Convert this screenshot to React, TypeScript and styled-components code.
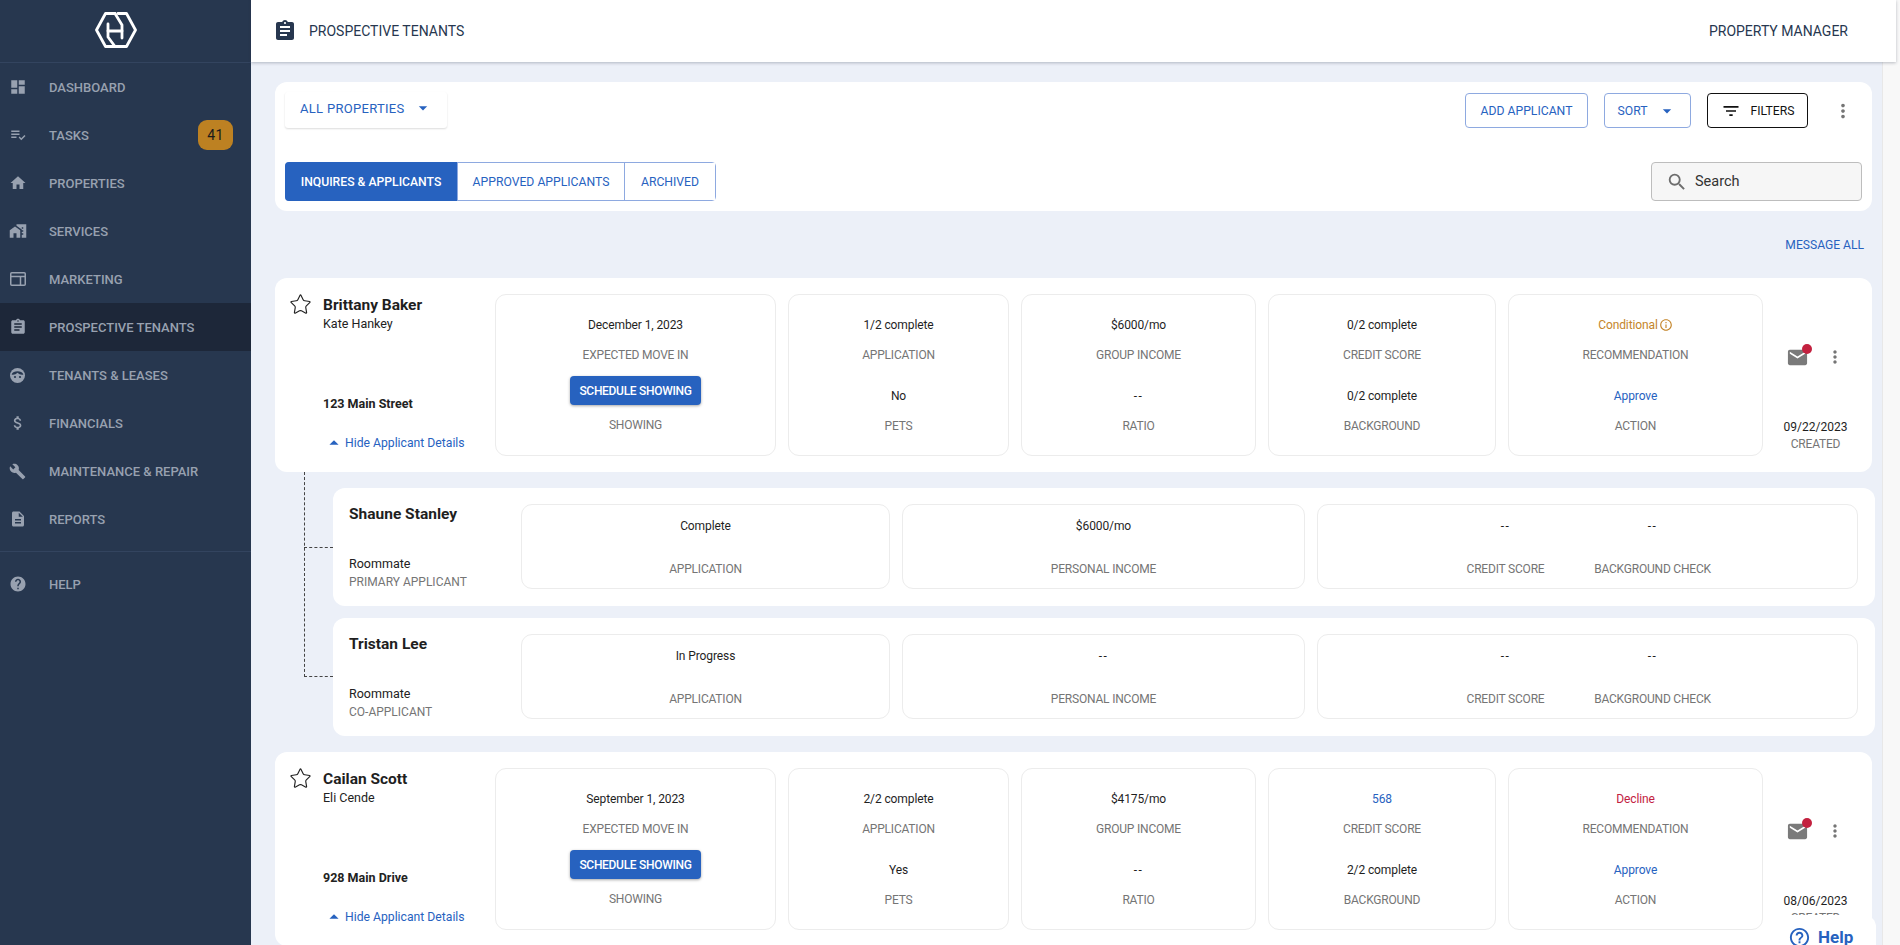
import React from "react";
import styled, { createGlobalStyle } from "styled-components";
import { Star } from "lucide-react";
import {
  MdDashboard, MdPlaylistAddCheck, MdHome, MdMapsHomeWork, MdAssignment,
  MdAttachMoney, MdBuild, MdDescription, MdHelp, MdMail, MdMoreVert, MdFilterList, MdSearch,
  MdArrowDropDown, MdArrowDropUp, MdInfoOutline, MdHelpOutline,
} from "react-icons/md";

const Global = createGlobalStyle`
  html, body { margin: 0; height: 100%; overflow: hidden; background: #ecf0f8; }
  body { font-family: Roboto, "Liberation Sans", sans-serif; color: #1f1f1f; }
  * { box-sizing: border-box; }
`;

const Shell = styled.div`display: flex; height: 945px; width: 1900px; position: relative; overflow: hidden;`;
const Sidebar = styled.aside`width: 251px; flex: none; background: #27374f; display: flex; flex-direction: column;`;
const LogoBar = styled.div`height: 63px; display: flex; align-items: center; justify-content: center; padding: 0 20px 2px 0; border-bottom: 1px solid #33445f;`;
const NavList = styled.nav`display: flex; flex-direction: column; padding-bottom: 8px; border-bottom: 1px solid #33445f;`;
const HelpNav = styled.nav`display: flex; flex-direction: column; padding-top: 8px;`;
const NavItem = styled.a<{ $active?: boolean }>`
  height: 48px; display: flex; align-items: center; padding: 0 18px 0 9px; gap: 23px;
  color: #98a1b0; font-size: 13px; font-weight: 500;
  background: ${(p) => (p.$active ? "#1d2739" : "transparent")};
  svg { flex: none; }
`;
const NavIcon = styled.span`width: 17px; height: 18px; display: flex; align-items: center; justify-content: center;`;
const NavLabel = styled.span`flex: 1; white-space: nowrap;`;
const Count = styled.span`
  width: 35px; height: 30px; border-radius: 9px; background: #bd8122; color: #1b1b1b;
  font-size: 14px; display: flex; align-items: center; justify-content: center; font-weight: 400; letter-spacing: 0.5px;
`;

const Main = styled.main`flex: 1; min-width: 0; display: flex; flex-direction: column;`;
const Header = styled.header`
  height: 62px; flex: none; margin-right: 4px; background: #fff; display: flex; align-items: center; justify-content: space-between;
  padding: 0 48px 0 22px; box-shadow: 0 1px 3px rgba(40, 50, 70, 0.3); z-index: 2; color: #27374f; font-size: 14px;
`;
const HeaderTitle = styled.div`display: flex; align-items: center; gap: 12px;`;
const Content = styled.div`flex: 1; padding: 20px 28px 0 24px; display: flex; flex-direction: column; overflow: hidden;`;
const Track = styled.div`position: absolute; top: 0; right: 0; bottom: 0; width: 18px; background: #f8f8f8; border-left: 1px solid #e8e8e8; z-index: 1;`;

const Toolbar = styled.section`
  background: #fff; border-radius: 12px; height: 129px; padding: 10px; display: flex; flex-direction: column; gap: 34px; flex: none;
`;
const ToolRow = styled.div`display: flex; align-items: flex-end; justify-content: space-between; height: 36px;`;
const TabRow = styled.div`display: flex; align-items: center; justify-content: space-between; height: 39px;`;
const Picker = styled.div`
  width: 162px; height: 36px; display: flex; align-items: center; padding: 0 0 4px 15px; gap: 8px; color: #2762bf; font-size: 13px; letter-spacing: 0.3px;
  box-shadow: 0 1px 2px rgba(0, 0, 0, 0.14); border-radius: 3px;
`;
const Actions = styled.div`display: flex; align-items: center;`;
const OutlineButton = styled.button<{ $w: number; $mr: number }>`
  width: ${(p) => p.$w}px; margin-right: ${(p) => p.$mr}px; height: 35px; background: #fff; border: 1px solid #8ea9e0; border-radius: 4px; color: #2762bf;
  font: 400 12.2px Roboto, sans-serif; display: flex; align-items: center; justify-content: center; gap: 10px; padding: 0;
`;
const FilterButton = styled.button`
  width: 101px; height: 35px; background: #fff; border: 1px solid #111; border-radius: 4px; color: #111;
  font: 400 12.2px Roboto, sans-serif; display: flex; align-items: center; justify-content: center; gap: 10px; padding: 0;
`;
const Kebab = styled.span<{ $ml: number }>`margin-left: ${(p) => p.$ml}px; color: #757575; display: flex;`;
const Tabs = styled.div`display: flex; height: 39px; border: 1px solid #8ea9e0; border-radius: 4px;`;
const Tab = styled.div<{ $active?: boolean; $w: number }>`
  width: ${(p) => p.$w}px; display: flex; align-items: center; justify-content: center; font-size: 12.2px;
  color: ${(p) => (p.$active ? "#fff" : "#2762bf")};
  background: ${(p) => (p.$active ? "#2762bf" : "#fff")};
  font-weight: ${(p) => (p.$active ? 500 : 400)};
  margin: ${(p) => (p.$active ? "-1px 0 -1px -1px" : "0")};
  border-radius: ${(p) => (p.$active ? "4px 0 0 4px" : "0")};
  & + & { border-left: 1px solid #8ea9e0; }
`;
const SearchBox = styled.div`
  width: 211px; height: 39px; background: #f6f6f6; border: 1px solid #bdbdbd; border-radius: 4px;
  display: flex; align-items: center; padding-left: 14px; gap: 7px; font-size: 14.5px; color: #333;
  svg { color: #6d6d6d; }
`;
const MessageAll = styled.div`height: 67px; flex: none; display: flex; align-items: center; justify-content: flex-end; padding-right: 8px; color: #2762bf; font-size: 12.1px;`;

const Card = styled.section`
  background: #fff; border-radius: 12px; flex: none; height: 194px; padding: 16px 0 16px 16px;
  display: grid; grid-template-columns: 192px 281px 221px 235px 228px 255px 1fr; column-gap: 12px;
`;
const Owner = styled.div`display: flex; flex-direction: column; position: relative; padding-left: 32px; margin-right: -12px;`;
const StarSlot = styled.span`position: absolute; left: -2px; top: -1px; color: #222; display: flex;`;
const Name = styled.div`font-size: 15.5px; font-weight: 700; line-height: 22px; color: #1f1f1f;`;
const Sub = styled.div`font-size: 12.5px; line-height: 16px; color: #222;`;
const Address = styled.div`font-size: 12.5px; font-weight: 700; color: #222; margin-top: 62px; line-height: 20px;`;
const Hide = styled.div`display: flex; align-items: center; margin-top: 18px; color: #2762bf; font-size: 12.2px; line-height: 20px; white-space: nowrap;`;

const Panel = styled.div`border: 1px solid #ececec; border-radius: 11px; display: flex; flex-direction: column; padding-top: 15px;`;
const Stat = styled.div`display: flex; flex-direction: column; align-items: center; & + & { margin-top: 11px; }`;
const Value = styled.div<{ $tone?: string; $dash?: boolean }>`
  height: 30px; display: flex; align-items: center; gap: 1px; font-size: 12px; letter-spacing: ${(p) => (p.$dash ? "1.5px" : "-0.1px")}; color: ${(p) => p.$tone || "#1f1f1f"};
`;
const Label = styled.div`height: 30px; display: flex; align-items: center; font-size: 12px; letter-spacing: -0.2px; color: #757575; white-space: nowrap;`;
const Schedule = styled.button`
  width: 131px; height: 29px; margin-top: 6px; background: #2762bf; color: #fff; border: 0; border-radius: 4px; font: 500 12px Roboto, sans-serif; letter-spacing: -0.3px;
  box-shadow: 0 1px 3px rgba(0, 0, 0, 0.35); padding: 0;
`;
const ShowingLabel = styled(Label)`margin-top: 5px;`;

const Side = styled.div`display: flex; flex-direction: column; align-items: center; padding-right: 4px; margin-left: -12px;`;
const SideIcons = styled.div`display: flex; align-items: center; gap: 16px; height: 30px; margin-top: 48px;`;
const MailWrap = styled.span`position: relative; display: flex; color: #7a7a7a;`;
const Dot = styled.span`position: absolute; top: -2px; right: -3px; width: 10px; height: 10px; border-radius: 50%; background: #c3213f;`;
const Dated = styled.div`margin-top: 47px; font-size: 12px; line-height: 17px; color: #1f1f1f;`;
const Created = styled.div`font-size: 12px; letter-spacing: -0.2px; line-height: 17px; color: #757575;`;

const Applicants = styled.div`position: relative; flex: none; padding: 16px 0 16px 58px; display: flex; flex-direction: column; gap: 12px; margin-right: -3px;`;
const Connector = styled.div`position: absolute; left: 29px; top: 0; width: 29px; height: 205px; border-left: 1px dashed #444; border-bottom: 1px dashed #444;`;
const ConnectorTick = styled.div`position: absolute; left: 29px; top: 75px; width: 29px; border-top: 1px dashed #444;`;
const Applicant = styled.section`
  background: #fff; border-radius: 12px; height: 118px; padding: 16px 17px 17px 16px;
  display: grid; grid-template-columns: 160px 369px 403px 1fr; grid-template-rows: minmax(0, 1fr); column-gap: 12px;
`;
const Person = styled.div`display: flex; flex-direction: column;`;
const PersonName = styled.div`font-size: 15.5px; font-weight: 700; line-height: 22px; margin-top: -1px; color: #1f1f1f; height: 52px; flex: none;`;
const Role = styled.div`font-size: 12.5px; line-height: 18px; color: #222; flex: none;`;
const RoleKind = styled.div`font-size: 12px; line-height: 18px; color: #757575; white-space: nowrap; flex: none;`;
const WidePanel = styled.div`border: 1px solid #ececec; border-radius: 11px; display: flex; justify-content: center; gap: 40px;`;
const WideStat = styled.div<{ $w?: number }>`
  display: flex; flex-direction: column; align-items: center; justify-content: space-between; padding: 6px 0 4px; ${(p) => (p.$w ? `width: ${p.$w}px;` : "")}
`;
const Floating = styled.div`
  position: absolute; right: 24px; bottom: 0; width: 108px; height: 30px; background: #fff; border-radius: 12px 12px 0 0; z-index: 3;
  display: flex; align-items: flex-start; padding: 11px 0 0 20px; gap: 7px; color: #2762bf; font-size: 17px; font-weight: 700; line-height: 22px;
`;

const Logo = () => (
  <svg width="42" height="36" viewBox="0 0 42 36" fill="none" stroke="#fff" strokeWidth="2.8" strokeLinejoin="round" strokeLinecap="round">
    <path d="M20 1.500H10.500L1.500 18L10.500 34.500H20" />
    <path d="M23 1.500H31.500L40.500 18L31.500 34.500H17" />
    <path d="M20 1.500L27 13V26" />
    <path d="M13 12V25L20 34.500" />
    <path d="M13 19H27" />
  </svg>
);

const FaceIcon = () => (
  <svg width="17" height="17" viewBox="0 0 17 17">
    <circle cx="8.500" cy="8.500" r="7.500" fill="#98a1b0" />
    <path d="M2.600 7.500C4 3.300 13 3.300 14.400 7.500C12.400 8 10 7.400 8.500 5.800C7 7.400 4.600 8 2.600 7.500Z" fill="#27374f" />
    <circle cx="6" cy="10" r="1.100" fill="#27374f" />
    <circle cx="11" cy="10" r="1.100" fill="#27374f" />
  </svg>
);

const MarketingIcon = () => (
  <svg width="16" height="14" viewBox="0 0 16 14" fill="none" stroke="#98a1b0" strokeWidth="1.500">
    <rect x="0.750" y="0.750" width="14.500" height="12.500" rx="1" />
    <path d="M1 4.500H15" />
    <path d="M10.500 4.500V13" />
  </svg>
);

const nav: [string, React.ReactNode, boolean?, string?][] = [
  ["DASHBOARD", <MdDashboard size={18} />],
  ["TASKS", <MdPlaylistAddCheck size={18} />, false, "41"],
  ["PROPERTIES", <MdHome size={18} />],
  ["SERVICES", <MdMapsHomeWork size={18} />],
  ["MARKETING", <MarketingIcon />],
  ["PROSPECTIVE TENANTS", <MdAssignment size={18} />, true],
  ["TENANTS & LEASES", <FaceIcon />],
  ["FINANCIALS", <MdAttachMoney size={18} />],
  ["MAINTENANCE & REPAIR", <MdBuild size={17} />],
  ["REPORTS", <MdDescription size={18} />],
];

type Row = {
  name: string; sub: string; addr: string; move: string; app: string; pets: string; income: string; ratio: string;
  credit: React.ReactNode; bg: string; rec: React.ReactNode; date: string;
};

const rows: Row[] = [
  {
    name: "Brittany Baker", sub: "Kate Hankey", addr: "123 Main Street", move: "December 1, 2023", app: "1/2 complete", pets: "No",
    income: "$6000/mo", ratio: "--", credit: <Value>0/2 complete</Value>, bg: "0/2 complete",
    rec: <Value $tone="#c4852a">Conditional<MdInfoOutline size={14} /></Value>, date: "09/22/2023",
  },
  {
    name: "Cailan Scott", sub: "Eli Cende", addr: "928 Main Drive", move: "September 1, 2023", app: "2/2 complete", pets: "Yes",
    income: "$4175/mo", ratio: "--", credit: <Value $tone="#2762bf">568</Value>, bg: "2/2 complete",
    rec: <Value $tone="#c3213f">Decline</Value>, date: "08/06/2023",
  },
];

const ApplicantCard = ({ r }: { r: Row }) => (
  <Card>
    <Owner>
      <StarSlot><Star size={23} strokeWidth={1.2} /></StarSlot>
      <Name>{r.name}</Name>
      <Sub>{r.sub}</Sub>
      <Address>{r.addr}</Address>
      <Hide><MdArrowDropUp size={22} />Hide Applicant Details</Hide>
    </Owner>
    <Panel>
      <Stat><Value>{r.move}</Value><Label>EXPECTED MOVE IN</Label><Schedule>SCHEDULE SHOWING</Schedule><ShowingLabel>SHOWING</ShowingLabel></Stat>
    </Panel>
    <Panel>
      <Stat><Value>{r.app}</Value><Label>APPLICATION</Label></Stat>
      <Stat><Value>{r.pets}</Value><Label>PETS</Label></Stat>
    </Panel>
    <Panel>
      <Stat><Value>{r.income}</Value><Label>GROUP INCOME</Label></Stat>
      <Stat><Value $dash>{r.ratio}</Value><Label>RATIO</Label></Stat>
    </Panel>
    <Panel>
      <Stat>{r.credit}<Label>CREDIT SCORE</Label></Stat>
      <Stat><Value>{r.bg}</Value><Label>BACKGROUND</Label></Stat>
    </Panel>
    <Panel>
      <Stat>{r.rec}<Label>RECOMMENDATION</Label></Stat>
      <Stat><Value $tone="#2762bf">Approve</Value><Label>ACTION</Label></Stat>
    </Panel>
    <Side>
      <SideIcons>
        <MailWrap><MdMail size={23} /><Dot /></MailWrap>
        <MdMoreVert size={20} color="#757575" />
      </SideIcons>
      <Dated>{r.date}</Dated>
      <Created>CREATED</Created>
    </Side>
  </Card>
);

const people = [
  { name: "Shaune Stanley", kind: "PRIMARY APPLICANT", app: "Complete", income: "$6000/mo" },
  { name: "Tristan Lee", kind: "CO-APPLICANT", app: "In Progress", income: "--" },
];

export default function App() {
  return (
    <Shell>
      <Global />
      <Sidebar>
        <LogoBar><Logo /></LogoBar>
        <NavList>
          {nav.map(([label, icon, active, count]) => (
            <NavItem key={label} $active={active}>
              <NavIcon>{icon}</NavIcon>
              <NavLabel>{label}</NavLabel>
              {count && <Count>{count}</Count>}
            </NavItem>
          ))}
        </NavList>
        <HelpNav>
          <NavItem><NavIcon><MdHelp size={18} /></NavIcon><NavLabel>HELP</NavLabel></NavItem>
        </HelpNav>
      </Sidebar>
      <Main>
        <Header>
          <HeaderTitle><MdAssignment size={24} />PROSPECTIVE TENANTS</HeaderTitle>
          <div>PROPERTY MANAGER</div>
        </Header>
        <Content>
          <Toolbar>
            <ToolRow>
              <Picker>ALL PROPERTIES<MdArrowDropDown size={20} /></Picker>
              <Actions>
                <OutlineButton $w={123} $mr={16}>ADD APPLICANT</OutlineButton>
                <OutlineButton $w={87} $mr={16}>SORT<MdArrowDropDown size={20} /></OutlineButton>
                <FilterButton><MdFilterList size={20} />FILTERS</FilterButton>
                <Kebab $ml={24}><MdMoreVert size={22} /></Kebab>
                <Kebab $ml={8} />
              </Actions>
            </ToolRow>
            <TabRow>
              <Tabs>
                <Tab $active $w={172}>INQUIRES &amp; APPLICANTS</Tab>
                <Tab $w={167}>APPROVED APPLICANTS</Tab>
                <Tab $w={91}>ARCHIVED</Tab>
              </Tabs>
              <SearchBox><MdSearch size={22} />Search</SearchBox>
            </TabRow>
          </Toolbar>
          <MessageAll>MESSAGE ALL</MessageAll>
          <ApplicantCard r={rows[0]} />
          <Applicants>
            <Connector />
            <ConnectorTick />
            {people.map((p) => (
              <Applicant key={p.name}>
                <Person>
                  <PersonName>{p.name}</PersonName>
                  <Role>Roommate</Role>
                  <RoleKind>{p.kind}</RoleKind>
                </Person>
                <WidePanel><WideStat><Value>{p.app}</Value><Label>APPLICATION</Label></WideStat></WidePanel>
                <WidePanel><WideStat><Value $dash={p.income === "--"}>{p.income}</Value><Label>PERSONAL INCOME</Label></WideStat></WidePanel>
                <WidePanel>
                  <WideStat $w={90}><Value $dash>--</Value><Label>CREDIT SCORE</Label></WideStat>
                  <WideStat $w={124}><Value $dash>--</Value><Label>BACKGROUND CHECK</Label></WideStat>
                </WidePanel>
              </Applicant>
            ))}
          </Applicants>
          <ApplicantCard r={rows[1]} />
        </Content>
      </Main>
      <Track />
      <Floating><MdHelpOutline size={23} />Help</Floating>
    </Shell>
  );
}
